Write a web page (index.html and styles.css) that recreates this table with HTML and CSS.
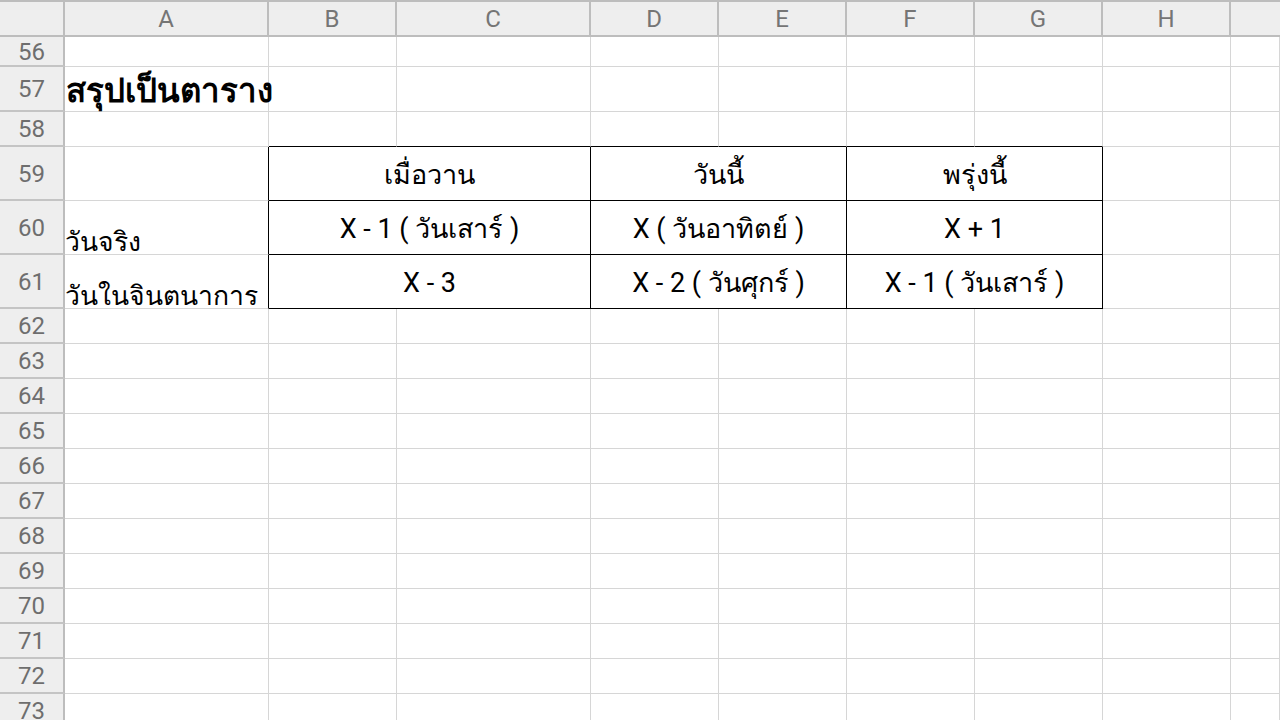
FILE: index.html
```html
<!DOCTYPE html>
<html lang="th">
<head>
<meta charset="utf-8">
<title>Sheet</title>
<link rel="stylesheet" href="styles.css">
</head>
<body>
<div class="sheet">
  <div class="ch corner"></div>
  <div class="ch">A</div><div class="ch">B</div><div class="ch">C</div><div class="ch">D</div><div class="ch">E</div><div class="ch">F</div><div class="ch">G</div><div class="ch">H</div><div class="ch last"></div>

  <div class="rh">56</div>
  <div class="c"></div><div class="c"></div><div class="c"></div><div class="c"></div><div class="c"></div><div class="c"></div><div class="c"></div><div class="c"></div><div class="c"></div>

  <div class="rh">57</div>
  <div class="c title">สรุปเป็นตาราง</div><div class="c"></div><div class="c"></div><div class="c"></div><div class="c"></div><div class="c"></div><div class="c"></div><div class="c"></div><div class="c"></div>

  <div class="rh">58</div>
  <div class="c"></div><div class="c tb"></div><div class="c tb"></div><div class="c tb"></div><div class="c tb"></div><div class="c tb"></div><div class="c tb"></div><div class="c"></div><div class="c"></div>

  <div class="rh">59</div>
  <div class="c tr"></div>
  <div class="c m">เมื่อวาน</div>
  <div class="c m">วันนี้</div>
  <div class="c m">พรุ่งนี้</div>
  <div class="c"></div><div class="c"></div>

  <div class="rh">60</div>
  <div class="c tr lbl">วันจริง</div>
  <div class="c m">X - 1 ( วันเสาร์ )</div>
  <div class="c m">X ( วันอาทิตย์ )</div>
  <div class="c m">X + 1</div>
  <div class="c"></div><div class="c"></div>

  <div class="rh">61</div>
  <div class="c tr lbl">วันในจินตนาการ</div>
  <div class="c m">X - 3</div>
  <div class="c m">X - 2 ( วันศุกร์ )</div>
  <div class="c m">X - 1 ( วันเสาร์ )</div>
  <div class="c"></div><div class="c"></div>

  <div class="rh">62</div><div class="c"></div><div class="c"></div><div class="c"></div><div class="c"></div><div class="c"></div><div class="c"></div><div class="c"></div><div class="c"></div><div class="c"></div>
  <div class="rh">63</div><div class="c"></div><div class="c"></div><div class="c"></div><div class="c"></div><div class="c"></div><div class="c"></div><div class="c"></div><div class="c"></div><div class="c"></div>
  <div class="rh">64</div><div class="c"></div><div class="c"></div><div class="c"></div><div class="c"></div><div class="c"></div><div class="c"></div><div class="c"></div><div class="c"></div><div class="c"></div>
  <div class="rh">65</div><div class="c"></div><div class="c"></div><div class="c"></div><div class="c"></div><div class="c"></div><div class="c"></div><div class="c"></div><div class="c"></div><div class="c"></div>
  <div class="rh">66</div><div class="c"></div><div class="c"></div><div class="c"></div><div class="c"></div><div class="c"></div><div class="c"></div><div class="c"></div><div class="c"></div><div class="c"></div>
  <div class="rh">67</div><div class="c"></div><div class="c"></div><div class="c"></div><div class="c"></div><div class="c"></div><div class="c"></div><div class="c"></div><div class="c"></div><div class="c"></div>
  <div class="rh">68</div><div class="c"></div><div class="c"></div><div class="c"></div><div class="c"></div><div class="c"></div><div class="c"></div><div class="c"></div><div class="c"></div><div class="c"></div>
  <div class="rh">69</div><div class="c"></div><div class="c"></div><div class="c"></div><div class="c"></div><div class="c"></div><div class="c"></div><div class="c"></div><div class="c"></div><div class="c"></div>
  <div class="rh">70</div><div class="c"></div><div class="c"></div><div class="c"></div><div class="c"></div><div class="c"></div><div class="c"></div><div class="c"></div><div class="c"></div><div class="c"></div>
  <div class="rh">71</div><div class="c"></div><div class="c"></div><div class="c"></div><div class="c"></div><div class="c"></div><div class="c"></div><div class="c"></div><div class="c"></div><div class="c"></div>
  <div class="rh">72</div><div class="c"></div><div class="c"></div><div class="c"></div><div class="c"></div><div class="c"></div><div class="c"></div><div class="c"></div><div class="c"></div><div class="c"></div>
  <div class="rh">73</div><div class="c"></div><div class="c"></div><div class="c"></div><div class="c"></div><div class="c"></div><div class="c"></div><div class="c"></div><div class="c"></div><div class="c"></div>
</div>
</body>
</html>
```

FILE: styles.css
```css
* { box-sizing: border-box; }
html, body {
  margin: 0;
  padding: 0;
  background: #fff;
  overflow: hidden;
}
body {
  font-family: Roboto, "Noto Sans", "DejaVu Sans", sans-serif;
  width: 1280px;
  height: 720px;
}
.sheet {
  display: grid;
  grid-template-columns: 65px 204px 128px 194px 128px 128px 128px 128px 128px 49px;
  grid-template-rows: 37px 30px 45px 35px 54px 54px 54px repeat(12, 35px);
  width: 1280px;
}
.ch {
  background: #eeeeee;
  border-top: 2px solid #bdbdbd;
  border-right: 2px solid #bdbdbd;
  border-bottom: 2px solid #bdbdbd;
  color: #757575;
  font-size: 24px;
  display: flex;
  align-items: center;
  justify-content: center;
  padding-top: 1px;
}
.ch.last { border-right: 0; }
.rh {
  background: #eeeeee;
  border-right: 2px solid #bdbdbd;
  border-bottom: 2px solid #c4c4c4;
  color: #6e6e6e;
  font-size: 24px;
  display: flex;
  align-items: center;
  justify-content: center;
  padding-top: 1px;
}
.c {
  border-right: 1px solid #d6d6d6;
  border-bottom: 1px solid #d6d6d6;
  min-width: 0;
  white-space: nowrap;
  color: #000;
  font-size: 27px;
}
.title {
  font-weight: 700;
  font-size: 33px;
  display: flex;
  align-items: center;
  padding-left: 1px;
  padding-top: 3px;
  overflow: visible;
  position: relative;
  z-index: 1;
}
.tb { border-bottom-color: #000; }
.tr { border-right-color: #000; }
.m {
  grid-column: span 2;
  border-right-color: #000;
  border-bottom-color: #000;
  display: flex;
  align-items: center;
  justify-content: center;
  padding-top: 2px;
}
.lbl {
  display: flex;
  align-items: flex-end;
  padding-left: 0;
  padding-bottom: 0;
  line-height: 0.85;
  font-size: 26.5px;
}
```
